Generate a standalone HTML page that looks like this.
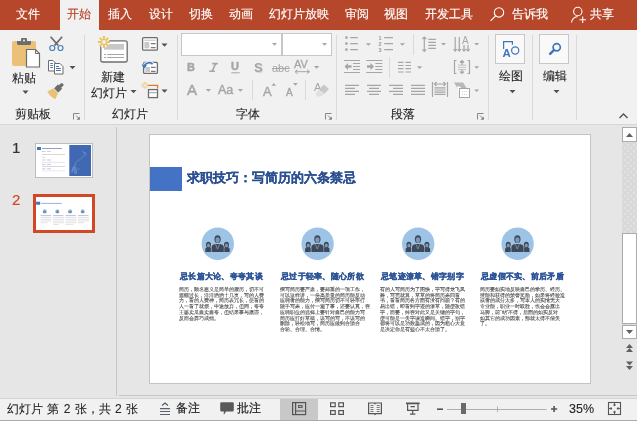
<!DOCTYPE html>
<html><head><meta charset="utf-8">
<style>
*{margin:0;padding:0;box-sizing:border-box}
html,body{width:637px;height:421px;overflow:hidden}
body{position:relative;will-change:transform;background:#E6E6E6;font-family:"Liberation Sans",sans-serif;color:#444}
.a{position:absolute;white-space:nowrap;line-height:1}
#tabs{position:absolute;left:0;top:0;width:637px;height:30px;background:#B7472A}
.tab{position:absolute;top:7px;font-size:12px;color:#fff;line-height:14px;-webkit-text-stroke:0.15px currentColor}
#ribbon{position:absolute;left:0;top:30px;width:637px;height:95px;background:#F1F1F1;border-bottom:1px solid #D6D6D6}
.sep{position:absolute;width:1px;background:#DADADA}
.lbl{position:absolute;font-size:12px;color:#262626;line-height:14px;-webkit-text-stroke:0.1px #262626}
svg{position:absolute;overflow:visible}
.dis{color:#A6A6A6}
.body{font-size:4.75px;line-height:5.7px;color:#505050;-webkit-text-stroke:0.1px #505050}
</style></head><body>
<div id="tabs">
 <div class="a" style="left:60px;top:0;width:39px;height:30px;background:#F1F1F1"></div>
 <span class="tab" style="left:16px">文件</span>
 <span class="tab" style="left:67px;color:#B7472A">开始</span>
 <span class="tab" style="left:108px">插入</span>
 <span class="tab" style="left:149px">设计</span>
 <span class="tab" style="left:189px">切换</span>
 <span class="tab" style="left:229px">动画</span>
 <span class="tab" style="left:269px">幻灯片放映</span>
 <span class="tab" style="left:345px">审阅</span>
 <span class="tab" style="left:384px">视图</span>
 <span class="tab" style="left:425px">开发工具</span>
 <span class="tab" style="left:512px">告诉我</span>
 <span class="tab" style="left:590px">共享</span>
</div>
<div id="ribbon"></div>
<!-- separators -->
<div class="sep" style="left:84px;top:35px;height:85px"></div>
<div class="sep" style="left:177px;top:35px;height:85px"></div>
<div class="sep" style="left:336px;top:35px;height:85px"></div>
<div class="sep" style="left:488px;top:35px;height:85px"></div>
<div class="sep" style="left:532px;top:35px;height:85px"></div>
<div class="sep" style="left:576px;top:35px;height:85px"></div>
<!-- group labels -->
<span class="lbl" style="left:15px;top:107px">剪贴板</span>
<span class="lbl" style="left:112px;top:107px">幻灯片</span>
<span class="lbl" style="left:236px;top:107px">字体</span>
<span class="lbl" style="left:391px;top:107px">段落</span>
<!-- button labels -->
<span class="lbl" style="left:12px;top:71px">粘贴</span>
<span class="lbl" style="left:101px;top:70px">新建</span>
<span class="lbl" style="left:91px;top:86px">幻灯片</span>
<span class="lbl" style="left:499px;top:69px">绘图</span>
<span class="lbl" style="left:543px;top:69px">编辑</span>
<!-- workspace -->
<div class="a" style="left:0;top:125px;width:637px;height:273px;background:#E6E6E6"></div>
<div class="a" style="left:116px;top:127px;width:1px;height:269px;background:#C6C6C6"></div>
<div class="a" style="left:119px;top:395px;width:518px;height:1px;background:#C6C6C6"></div>
<div class="a" style="left:0;top:398px;width:637px;height:23px;background:#F1F1F1;border-top:1px solid #D4D4D4"></div>
<!-- slide pane -->
<span class="a" style="left:12px;top:140px;font-size:15px;color:#333;-webkit-text-stroke:0.2px #333">1</span>
<span class="a" style="left:12px;top:192px;font-size:15px;color:#D24726;-webkit-text-stroke:0.2px #D24726">2</span>
<div class="a" style="left:35px;top:143px;width:58px;height:35px;background:#fff;border:1px solid #BDBDBD"></div>
<div class="a" style="left:33px;top:194px;width:62px;height:39px;border:3px solid #D24726;background:#fff"></div>
<svg style="left:0;top:0" width="120" height="240">
 <rect x="69.3" y="145" width="21.7" height="31" fill="#4168B2"/>
 <g fill="none" stroke="#7D9AD2" stroke-width="0.6" opacity="0.9">
  <path d="M82 151q2 2 4 2.5q1.5 1 -0.5 2q-3 0.5 -4 2.5q-1.5 2 -4 3q-2 1 -2.5 3.5q0 2 -2 3.5q-1.5 1.5 -1 4"/>
  <path d="M76 165q-2 1-3 3t-1 5M79 168q-1 2-3 3"/>
 </g>
 <g fill="#6F8FCC" opacity="0.7"><rect x="72.5" y="167" width="4" height="4"/><rect x="74" y="171" width="3" height="3"/><rect x="83.5" y="152" width="2" height="2"/></g>
 <rect x="37" y="147" width="4" height="3" fill="#4472C4"/>
 <g stroke-width="0.8">
  <path d="M42 148.5h20" stroke="#7888B8"/>
  <path d="M42 151.5h3.5M47 151.5h4" stroke="#B4C6E8"/>
  <path d="M42 154.5h23" stroke="#D4CCC4"/>
  <path d="M42 157.3h3" stroke="#DCCCCC"/>
  <path d="M42 160h3.5M47 160h4" stroke="#AFC0E0"/>
  <path d="M42 162.3h23" stroke="#DEDEDE"/>
  <path d="M42 164.4h3.5M47 164.4h4" stroke="#AFC0E0"/>
  <path d="M42 166.5h23" stroke="#CCCCD4"/>
  <path d="M42 168.8h3.5M47 168.8h4" stroke="#AFC0E0"/>
  <path d="M42 170.8h23" stroke="#E4E4E4"/>
 </g>
</svg>
<!-- main slide -->
<div class="a" style="left:149px;top:134px;width:442px;height:250px;background:#fff;border:1px solid #C4C4C4"></div>
<!-- scrollbar -->
<div class="a" style="left:622px;top:127px;width:15px;height:212px;background-color:#D9D9D9;background-image:radial-gradient(circle,#E8E8E8 0.6px,transparent 0.9px),radial-gradient(circle,#E8E8E8 0.6px,transparent 0.9px);background-size:6px 6px;background-position:0 0,3px 3px"></div>
<div class="a" style="left:622px;top:127px;width:15px;height:15px;background:#fff;border:1px solid #ABABAB"></div>
<div class="a" style="left:622px;top:233px;width:15px;height:91px;background:#fff;border:1px solid #ABABAB"></div>
<div class="a" style="left:622px;top:325px;width:15px;height:14px;background:#fff;border:1px solid #ABABAB"></div>
<svg style="left:0;top:0" width="637" height="421">
 <path d="M626 137h7l-3.5-4z M626 330h7l-3.5 4z" fill="#606060"/>
 <path d="M626 348l3.5-4 3.5 4z M626 352l3.5-4 3.5 4z M626 361.5l3.5 4 3.5-4z M626 366l3.5 4 3.5-4z" fill="#606060"/>
</svg>
<!-- status bar -->
<span class="a" style="left:7px;top:401.5px;font-size:12px;color:#262626;line-height:14px;word-spacing:1px;-webkit-text-stroke:0.1px #262626">幻灯片 第 2 张，共 2 张</span>
<!-- slide content -->
<div class="a" style="left:0;top:0;width:637px;height:421px">
<div class="a" style="left:150px;top:167px;width:32px;height:24px;background:#4472C4"></div>
<span class="a" style="left:186.5px;top:170px;font-size:13px;font-weight:bold;color:#2B5091;line-height:15px;-webkit-text-stroke:0.2px #2B5091">求职技巧：写简历的六条禁忌</span>
<svg style="left:0;top:0" width="637" height="421">
 <defs><g id="ppl">
  <circle r="16.2" fill="#9DC3E6"/>
  <g fill="#3E4858">
   <ellipse cx="-9.3" cy="0.9" rx="2.5" ry="2.9"/><path d="M-12.5 8.3v-3q0-1.8 3.2-2.4q3.2 0.6 3.2 2.4v3z"/>
   <ellipse cx="8.7" cy="0.9" rx="2.5" ry="2.9"/><path d="M5.5 8.3v-3q0-1.8 3.2-2.4q3.2 0.6 3.2 2.4v3z"/>
  </g>
  <g fill="#7F97B2"><ellipse cx="-9.3" cy="1.6" rx="1.5" ry="1.9"/><ellipse cx="8.7" cy="1.6" rx="1.5" ry="1.9"/></g>
  <path d="M-6.9 8.6v-5.4q0.2-2.6 4.4-3.4h4.6q4.2 0.8 4.4 3.4v5.4z" fill="#9DC3E6"/>
  <path d="M-6.2 8.3v-5q0.2-2.3 3.8-3h4.6q3.6 0.7 3.8 3v5z" fill="#3E4858"/>
  <path d="M-2.3 0.4l2 4.8 2-4.8" fill="none" stroke="#8EA4BE" stroke-width="0.7"/>
  <ellipse cx="-0.2" cy="-4.7" rx="3.6" ry="4.3" fill="#9DC3E6"/>
  <ellipse cx="-0.2" cy="-4.6" rx="3.1" ry="3.9" fill="#3E4858"/>
  <ellipse cx="-0.2" cy="-3.7" rx="2.1" ry="2.8" fill="#7F97B2"/>
 </g></defs>
 <use href="#ppl" x="217.8" y="243.8"/>
 <use href="#ppl" x="317.6" y="243.8"/>
 <use href="#ppl" x="418.2" y="243.8"/>
 <use href="#ppl" x="517.6" y="243.8"/>
</svg>
<span class="a" style="left:180px;top:271px;font-size:8.3px;font-weight:bold;color:#2E5597;line-height:10px;letter-spacing:0.3px;-webkit-text-stroke:0.3px #2E5597">忌长篇大论、夸夸其谈</span>
<div class="a body" style="left:179px;top:287px">简历，顾名思义是简单的履历，切不可<br>篇幅过长，洋洋洒洒十几页，写的人费<br>力，看的人费神，简历表冗长，使看的<br>人一看了就烦，中途放弃，但同，夸夸<br>王婆卖瓜自卖自夸，但结果事与愿违，<br>反而会弄巧成拙。</div>
<span class="a" style="left:281px;top:271px;font-size:8.3px;font-weight:bold;color:#2E5597;line-height:10px;letter-spacing:0.3px;-webkit-text-stroke:0.3px #2E5597">忌过于轻率、随心所欲</span>
<div class="a body" style="left:280px;top:287px">撰写简历要严肃，要郑重的一项工作，<br>可以这样讲，一份高质量的简历能反动<br>应聘者的能力，撰写简历切不可轻率行<br>随手写来，应付一遍了事，还要认真，在<br>应聘职位的选择上要针对自己的能力写<br>简历应打好草稿，该写的写，不该写的<br>删除，轻松地写，简历应做到合适合<br>合轮、合理、合情。</div>
<span class="a" style="left:381px;top:271px;font-size:8.3px;font-weight:bold;color:#2E5597;line-height:10px;letter-spacing:0.3px;-webkit-text-stroke:0.3px #2E5597">忌笔迹潦草、错字别字</span>
<div class="a body" style="left:380px;top:287px">有的人写简历为了图快，字写得龙飞凤<br>舞，写完就算，草草的将简历来回看<br>书，看看简历各方面有没有问题？有的<br>易出错，即看到字迹的潦草，随便改错<br>字，而要，掉在对此又是关键的字句，<br>便可能是一失字误造瞬间。错字，别字<br>都将可以是功败垂成的，因为粗心大意<br>是决定你是有些心不太合适了。</div>
<span class="a" style="left:481px;top:271px;font-size:8.3px;font-weight:bold;color:#2E5597;line-height:10px;letter-spacing:0.3px;-webkit-text-stroke:0.3px #2E5597">忌虚假不实、前后矛盾</span>
<div class="a body" style="left:480px;top:287px">简历要如实地反映自己的学历、经历、<br>技能和获得的荣誉奖励，如果将经验造<br>或者的成分太多，写本人的实情无大<br>专业能，职业一时取胜，也会会露出<br>马脚，前“站”不得，后面的如实反对<br>如其它的成功因素，那就太得不偿失<br>了。</div>
</div>
<div class="a" style="left:36px;top:197px;width:56px;height:33px;overflow:hidden">
<div class="a" style="left:0;top:0;width:637px;height:421px;transform-origin:0 0;transform:scale(0.1267) translate(-149px,-130px)">
<div class="a" style="left:150px;top:167px;width:32px;height:24px;background:#4472C4"></div>
<svg style="left:0;top:0" width="637" height="421">
 <defs><g id="ppl2">
  <circle r="16.2" fill="#9DC3E6"/>
  <g fill="#3E4858">
   <ellipse cx="-9.3" cy="0.9" rx="2.5" ry="2.9"/><path d="M-12.5 8.3v-3q0-1.8 3.2-2.4q3.2 0.6 3.2 2.4v3z"/>
   <ellipse cx="8.7" cy="0.9" rx="2.5" ry="2.9"/><path d="M5.5 8.3v-3q0-1.8 3.2-2.4q3.2 0.6 3.2 2.4v3z"/>
  </g>
  <g fill="#7F97B2"><ellipse cx="-9.3" cy="1.6" rx="1.5" ry="1.9"/><ellipse cx="8.7" cy="1.6" rx="1.5" ry="1.9"/></g>
  <path d="M-6.9 8.6v-5.4q0.2-2.6 4.4-3.4h4.6q4.2 0.8 4.4 3.4v5.4z" fill="#9DC3E6"/>
  <path d="M-6.2 8.3v-5q0.2-2.3 3.8-3h4.6q3.6 0.7 3.8 3v5z" fill="#3E4858"/>
  <path d="M-2.3 0.4l2 4.8 2-4.8" fill="none" stroke="#8EA4BE" stroke-width="0.7"/>
  <ellipse cx="-0.2" cy="-4.7" rx="3.6" ry="4.3" fill="#9DC3E6"/>
  <ellipse cx="-0.2" cy="-4.6" rx="3.1" ry="3.9" fill="#3E4858"/>
  <ellipse cx="-0.2" cy="-3.7" rx="2.1" ry="2.8" fill="#7F97B2"/>
 </g></defs>
 <use href="#ppl2" x="217.8" y="243.8"/>
 <use href="#ppl2" x="317.6" y="243.8"/>
 <use href="#ppl2" x="418.2" y="243.8"/>
 <use href="#ppl2" x="517.6" y="243.8"/>
</svg>
</div>
<svg style="left:0;top:0" width="56" height="33">
 <path d="M5.2 6.4h20.5" stroke="#8C9CC8" stroke-width="0.8"/>
 <g stroke="#A7B4D8" stroke-width="0.8"><path d="M4.5 18.6h10.5M17 18.6h10.5M29.5 18.6h10.5M42 18.6h10.5"/></g>
 <g stroke="#D6D6D6" stroke-width="0.7">
  <path d="M4.5 20.6h11M17 20.6h11M29.5 20.6h11M42 20.6h11"/>
  <path d="M4.5 22.3h11M17 22.3h11M29.5 22.3h11M42 22.3h11"/>
  <path d="M4.5 24h11M17 24h11M29.5 24h11M42 24h11"/>
  <path d="M4.5 25.7h7M17 25.7h11M29.5 25.7h11M42 25.7h6"/>
  <path d="M17 27.4h6M29.5 27.4h8"/>
 </g>
</svg>
</div>
<!-- status icons -->
<div class="a" style="left:280px;top:399px;width:38px;height:22px;background:#C8C8C8"></div>
<div class="a" style="left:0;top:420px;width:637px;height:1px;background:#ABABAB"></div>
<span class="a" style="left:176px;top:401px;font-size:12px;color:#262626;line-height:14px;-webkit-text-stroke:0.2px #262626">备注</span>
<span class="a" style="left:237px;top:401px;font-size:12px;color:#262626;line-height:14px;-webkit-text-stroke:0.2px #262626">批注</span>
<span class="a" style="left:569px;top:402px;font-size:12.5px;color:#262626;line-height:14px;-webkit-text-stroke:0.1px #262626">35%</span>
<svg style="left:0;top:0" width="637" height="421">
 <path d="M162 405.5l3-2.5 3 2.5" fill="none" stroke="#555" stroke-width="1.1"/>
 <path d="M160 408.6h10M160 411.5h10M160 414.5h10" stroke="#5A6070" stroke-width="1.1"/>
 <path d="M221.5 402.2h11a1.3 1.3 0 0 1 1.3 1.3v6.7a1.3 1.3 0 0 1-1.3 1.3h-6.5l-2.2 3.6v-3.6h-2.3a1.3 1.3 0 0 1-1.3-1.3v-6.7a1.3 1.3 0 0 1 1.3-1.3z" fill="#595959"/>
 <g fill="none" stroke="#555" stroke-width="1.2">
  <rect x="292.6" y="402.6" width="13" height="12"/>
  <path d="M295.6 402.6v12M295.6 411h10"/>
  <rect x="298.5" y="405.6" width="3.6" height="1.8" stroke-width="1"/>
  <rect x="330.6" y="402.8" width="4.6" height="3.8"/><rect x="338.8" y="402.8" width="4.6" height="3.8"/>
  <rect x="330.6" y="410.6" width="4.6" height="3.8"/><rect x="338.8" y="410.6" width="4.6" height="3.8"/>
  <path d="M368.6 403v10.6h5.8l0.6 0.9 0.6-0.9h5.8v-10.6h-5.8l-0.6 0.8-0.6-0.8z"/>
  <path d="M370.5 405.5h3M370.5 407.5h3M370.5 409.5h3M370.5 411.5h3M376.7 405.5h3M376.7 407.5h3M376.7 409.5h3M376.7 411.5h3" stroke-width="0.8"/>
  <path d="M407.6 404.2v6.2h10.4v-6.2M412.7 410.4v3.6M410 414.2h5.4M410.5 406.6h4.4"/>
  <rect x="608.5" y="402.5" width="12" height="12" stroke="#555" stroke-width="1.1"/>
 </g>
 <path d="M406 403.4h13.6" stroke="#555" stroke-width="1.8"/>
 <g stroke="#555" stroke-width="0.9" fill="none">
  <path d="M614.5 403v3.2M613 405h3M614.5 414v-3.2M613 412h3M609 408.5h3.2M611 407v3M620 408.5h-3.2M618 407v3"/>
 </g>
 <path d="M437 409.2h6" stroke="#555" stroke-width="1.6"/>
 <path d="M551 409h6.2M554.1 405.9v6.2" stroke="#555" stroke-width="1.6"/>
 <path d="M447 409.5h99.5" stroke="#B0B0B0" stroke-width="1"/>
 <path d="M497.5 406.5v5.5" stroke="#B0B0B0" stroke-width="1"/>
 <rect x="461" y="403" width="5" height="11" fill="#6A6A6A"/>
 <!-- title icons -->
 <g fill="none" stroke="#fff" stroke-width="1.1">
  <circle cx="499" cy="12.4" r="4.7"/><path d="M495.6 15.9l-5 5"/>
  <circle cx="577.8" cy="11.5" r="4.2"/>
  <path d="M571.5 22.5c0.5-3 3-5.5 6-6"/>
  <path d="M582.7 16.5v6.5M579.5 19.7h6.5"/>
 </g>
</svg>
<!-- font group -->
<div class="a" style="left:181px;top:33px;width:101px;height:23px;background:#fff;border:1px solid #C6C6C6"></div>
<div class="a" style="left:282px;top:33px;width:50px;height:23px;background:#fff;border:1px solid #C6C6C6"></div>
<span class="a dis" style="left:187px;top:62px;font-size:11px;font-weight:bold;-webkit-text-stroke:0.4px #A6A6A6">B</span>

<span class="a dis" style="left:231px;top:61px;font-size:11px;font-weight:bold;-webkit-text-stroke:0.4px #A6A6A6">U</span>
<span class="a dis" style="left:254px;top:61px;font-size:13px;font-weight:bold;text-shadow:1px 1px 0 #D5D5D5">S</span>
<span class="a dis" style="left:272px;top:63px;font-size:11px;text-decoration:line-through">abc</span>
<span class="a dis" style="left:294px;top:59px;font-size:11px;-webkit-text-stroke:0.3px #A6A6A6">AV</span>
<span class="a dis" style="left:187px;top:82px;font-size:15px;-webkit-text-stroke:0.5px #A6A6A6">A</span>
<span class="a dis" style="left:218px;top:84px;font-size:12.5px;-webkit-text-stroke:0.4px #A6A6A6">Aa</span>
<span class="a dis" style="left:263px;top:85px;font-size:13px;-webkit-text-stroke:0.4px #A6A6A6">A</span>
<span class="a dis" style="left:286px;top:88px;font-size:10px;-webkit-text-stroke:0.4px #A6A6A6">A</span>
<span class="a dis" style="left:314px;top:82px;font-size:11px">A</span>
<div class="sep" style="left:252px;top:80px;height:20px"></div>
<div class="sep" style="left:305px;top:80px;height:20px"></div>
<svg style="left:0;top:0" width="637" height="124">
 <g fill="#A6A6A6">
  <path d="M272 43h5l-2.5 2.7z M322 43h5l-2.5 2.7z"/>
  <path d="M314 66h5.2l-2.6 2.8z M205.8 89h5.2l-2.6 2.8z M237.8 89h5.2l-2.6 2.8z"/>
  <path d="M271.5 85.7h4.6l-2.3-2.7z M293 83h4.8l-2.4 2.8z"/>
 </g>
 <path d="M212.2 63.6h5.6M209.2 71.2h5.6M215.6 63.6l-3.4 7.6" stroke="#A6A6A6" stroke-width="1.6" fill="none"/>
 <path d="M231.3 72.8h8.5" stroke="#A6A6A6" stroke-width="1"/>
 <path d="M295 71.7h14.5M295 71.7l2.5-2M295 71.7l2.5 2M309.5 71.7l-2.5-2M309.5 71.7l-2.5 2" stroke="#A6A6A6" stroke-width="1" fill="none"/>
 <path d="M319 89l5-4.5 5 4.5-5 5z" fill="#C8C8C8"/>
 <path d="M318.5 89.5l5 5-2.5 2h-3.5l-2-2z" fill="#E0E0E0"/>
</svg>
<!-- paragraph group -->
<div class="sep" style="left:413px;top:34px;height:21px"></div>
<div class="sep" style="left:389px;top:57px;height:21px"></div>
<svg style="left:0;top:0" width="637" height="124">
 <g fill="#A6A6A6">
  <circle cx="346.4" cy="37.6" r="1.4"/><circle cx="346.4" cy="43.6" r="1.4"/><circle cx="346.4" cy="49.6" r="1.4"/>
  <path d="M365.8 43.2h5.2l-2.6 2.6z M399.8 43.2h5.2l-2.6 2.6z M441 43h5l-2.5 2.5z M474.2 43h5l-2.5 2.5z M417 66.3h5.2l-2.6 2.6z M474.2 66.2h5l-2.5 2.5z M474.2 89.4h5l-2.5 2.5z"/>
 </g>
 <g stroke="#A6A6A6" stroke-width="1.2" fill="none">
  <path d="M350.2 37.6h7.6M350.2 43.6h7.6M350.2 49.6h7.6"/>
  <path d="M384.2 37.6h8.8M384.2 43.6h8.8M384.2 49.6h8.8"/>
  <!-- indent -->
  <path d="M344 60.5h16M353 63.5h7M353 66.5h7M353 69.5h7M344 72.5h16"/>
  <path d="M366.3 60.5h16M375.3 63.5h7M375.3 66.5h7M375.3 69.5h7M366.3 72.5h16"/>
  <path d="M398 62.3h5.5M405.5 62.3h5.5M398 65.5h5.5M405.5 65.5h5.5M398 68.7h5.5M405.5 68.7h5.5M398 72h5.5M405.5 72h5.5"/>
  <!-- line spacing -->
  <path d="M424.3 37v14M428.3 39.3h7.6M428.3 42.4h7.6M428.3 45.4h7.6M428.3 48.4h7.6"/>
  <path d="M422.3 39l2-2 2 2M422.3 49.4l2 2 2-2"/>
  <!-- text dir -->
  <path d="M455.2 37v14M459.3 37v14M464 45v6M468 45v6"/>
  <path d="M453.6 49.2l1.6 1.8 1.6-1.8M457.7 49.2l1.6 1.8 1.6-1.8M462.4 49.2l1.6 1.8 1.6-1.8M466.4 49.2l1.6 1.8 1.6-1.8"/>
  <!-- align text -->
  <path d="M456.5 60.5h-2v13h2M467.5 60.5h2v13h-2M462 61v4M462 69v4.5M460 62.5l2-2 2 2M460 71.5l2 2 2-2"/>
  <!-- alignment -->
  <path d="M345 85.3h14M345 88.4h10M345 91.3h14M345 94.4h10"/>
  <path d="M367 85.3h14M369 88.4h10M367 91.3h14M369 94.4h10"/>
  <path d="M389 85.3h14M393 88.4h10M389 91.3h14M393 94.4h10"/>
  <path d="M411 85.3h14M411 88.4h14M411 91.3h14M411 94.4h14"/>
  <path d="M432.5 82v15M447.5 82v15M434.5 84h11M436.5 82l-2 2 2 2M443.5 82l2 2-2 2M434.5 87.8h11M434.5 90h11M434.5 92.2h11M434.5 94.4h11"/>
 </g>
 <g stroke="#BDBDBD" stroke-width="0.9" fill="none"><path d="M458 65.1h8M458 67.3h8M458 69.5h8"/></g>
 <path d="M344.5 66.5l3.5-3.5v2.3h3.5v2.4h-3.5v2.3z" fill="#A6A6A6"/>
 <path d="M374 66.5l-3.5-3.5v2.3h-3.5v2.4h3.5v2.3z" fill="#A6A6A6"/>
 <g fill="#999" font-family="Liberation Sans" font-size="5.5" font-weight="bold">
  <text x="378.6" y="40">1</text><text x="378.6" y="46">2</text><text x="378.6" y="52">3</text>
 </g>
 <text x="462" y="44" font-family="Liberation Sans" font-size="10" fill="#A6A6A6">A</text>
 <path d="M454 82.5h9l5.5 8.5h-9.5z" fill="#B8B8B8"/>
 <path d="M457 86.5h3l3 4.5h-5z" fill="#fff"/>
 <rect x="459.5" y="88.5" width="10" height="9" fill="#fff" stroke="#A6A6A6" stroke-width="1"/>
 <path d="M462 91.5h5M462 94.5h5" stroke="#C8C8C8" stroke-width="0.8" stroke-dasharray="1 1"/>
</svg>
<!-- drawing/editing -->
<div class="a" style="left:495px;top:34px;width:30px;height:30px;background:#F9F9F9;border:1px solid #C8C8C8"></div>
<div class="a" style="left:539px;top:34px;width:30px;height:30px;background:#F9F9F9;border:1px solid #C8C8C8"></div>
<svg style="left:0;top:0" width="637" height="124">
  <path d="M503.6 49v-7.4h8.8v3.2" fill="none" stroke="#3D74C0" stroke-width="1.2"/>
 <circle cx="515.2" cy="50.5" r="3.6" fill="none" stroke="#3D74C0" stroke-width="1.2"/>
 <text x="502.4" y="57" font-family="Liberation Sans" font-weight="bold" font-size="11.5" fill="#3D74C0" stroke="#fff" stroke-width="0.6" paint-order="stroke">A</text>
 <circle cx="556.7" cy="47.3" r="3.6" fill="none" stroke="#3D74C0" stroke-width="1.7"/>
 <path d="M553.9 50.1l-3.8 3.8" stroke="#3D74C0" stroke-width="2.4" stroke-linecap="round"/>
 <path d="M509.5 90h6l-3 3.2z M553.5 90h6l-3 3.2z" fill="#505050"/>
 <path d="M619.5 118l4-4 4 4" fill="none" stroke="#505050" stroke-width="1.3"/>
</svg>
<!-- clipboard icons -->
<svg style="left:0;top:0" width="637" height="124" viewBox="0 0 637 124">
 <g id="paste">
  <rect x="12" y="41" width="24" height="25" rx="2" fill="#EBC178"/>
  <path d="M17 41h14v2.5a1.5 1.5 0 0 1-1.5 1.5h-11a1.5 1.5 0 0 1-1.5-1.5z" fill="#6D6D6D"/>
  <rect x="21" y="38" width="6" height="4" rx="1" fill="#6D6D6D"/>
  <circle cx="24" cy="40.5" r="1" fill="#F1F1F1"/>
  <path d="M26.5 49.5h9l4 4v13.5h-13z" fill="#fff" stroke="#6D6D6D" stroke-width="1.2"/>
  <path d="M35.5 49.5v4h4" fill="none" stroke="#6D6D6D" stroke-width="1"/>
 </g>
 <path d="M22.5 90.5h6l-3 3.5z" fill="#505050"/>
 <g id="scissors">
  <path d="M50.6 36.8l7.6 8.6M62.2 36.8l-7.6 8.6" stroke="#6D6D6D" stroke-width="1.7" fill="none"/>
  <circle cx="52.3" cy="48" r="2.5" fill="#F1F1F1" stroke="#4A7EBB" stroke-width="1.2"/>
  <circle cx="60.5" cy="48" r="2.5" fill="#F1F1F1" stroke="#4A7EBB" stroke-width="1.2"/>
 </g>
 <g id="copy">
  <path d="M48.5 60.5h4.5l2.5 2.5v8h-7z" fill="#fff" stroke="#6D6D6D" stroke-width="1"/>
  <path d="M50.3 63.5h2.6M50.3 65.5h2.6M50.3 67.5h2.6" stroke="#3D74C0" stroke-width="1"/>
  <path d="M54.5 63.5h5.5l3 3v7.5h-8.5z" fill="#fff" stroke="#6D6D6D" stroke-width="1"/>
  <path d="M56 66.5h3M56 68.5h4.8M56 70.5h4.8" stroke="#3D74C0" stroke-width="1"/>
 </g>
 <path d="M69.5 66h6l-3 3.2z" fill="#505050"/>
 <g id="painter" transform="translate(61.8 84.8) rotate(45)">
  <rect x="-1.7" y="-1.6" width="3.4" height="4.6" rx="1.3" fill="#6D6D6D"/>
  <rect x="-3" y="2.4" width="6" height="5.6" rx="0.6" fill="#6D6D6D"/>
  <path d="M-3.4 8.6h6.8l2.2 6.2q-5.6 2.2-11.2 0z" fill="#EBC178"/>
 </g>
 <!-- new slide -->
 <rect x="100.8" y="40.8" width="26.4" height="21.2" rx="2" fill="#fff" stroke="#6D6D6D" stroke-width="1.3"/>
 <rect x="104" y="44" width="20" height="5.7" fill="#C8C8C8"/>
 <path d="M104 54.5h2M107.2 54.5h16.8M104 57.5h2M107.2 57.5h16.8" stroke="#A6A6A6" stroke-width="1"/>
 <circle cx="104" cy="42" r="5.5" fill="#F1F1F1"/>
 <g stroke="#EDC060" stroke-width="1.9">
  <path d="M104 36v4.2M104 43.8v4.2M98 42h4.2M105.8 42h4.2M99.8 37.8l2.9 2.9M105.3 43.3l2.9 2.9M108.2 37.8l-2.9 2.9M102.7 43.3l-2.9 2.9"/>
 </g>
 <path d="M130.5 90h6l-3 3.2z" fill="#505050"/>
 <!-- layout -->
 <rect x="142.6" y="37.6" width="14.8" height="12.6" rx="1" fill="#fff" stroke="#6D6D6D" stroke-width="1.3"/>
 <rect x="144.4" y="39.6" width="11.2" height="1.4" fill="#D0D0D0"/>
 <rect x="144.4" y="42" width="4.8" height="6.3" fill="#C8C8C8"/>
 <path d="M150.8 43.6h4.8M150.8 47.6h4.8" stroke="#7A7A7A" stroke-width="1.2"/>
 <path d="M161.5 43.5h6l-3 3.2z" fill="#505050"/>
 <!-- reset -->
 <rect x="143.6" y="62.4" width="13.8" height="11" rx="1" fill="#fff" stroke="#6D6D6D" stroke-width="1.3"/>
 <rect x="145.4" y="67" width="4.6" height="5" fill="#C8C8C8"/>
 <path d="M151 67.3h4.6M151 71.3h4.6" stroke="#7A7A7A" stroke-width="1.2"/>
 <path d="M144 63.8h5.5" stroke="#C8C8C8" stroke-width="1"/>
 <path d="M144.2 66.5c0.8-3.5 5.8-5.2 8.4-2.2" fill="none" stroke="#F1F1F1" stroke-width="3.6"/>
 <path d="M144.2 66.5c0.8-3.5 5.8-5.2 8.4-2.2" fill="none" stroke="#3D74C0" stroke-width="1.7"/>
 <path d="M141.6 64.3l2.4 4.4 3-3.4z" fill="#3D74C0"/>
 <!-- section -->
 <path d="M148 85.4h9.6v3" fill="none" stroke="#E2772E" stroke-width="1.3"/>
 <rect x="148.5" y="89.6" width="9" height="8" fill="#fff" stroke="#6D6D6D" stroke-width="1.3"/>
 <path d="M149.2 92.7h7.6" stroke="#9A9A9A" stroke-width="1"/>
 <path d="M144.9 81.9v2.2M144.9 86.5v2.2M141.5 85.3h2.2M146.1 85.3h2.2M142.5 82.9l1.5 1.5M145.8 86.2l1.5 1.5M147.3 82.9l-1.5 1.5M144 86.2l-1.5 1.5" stroke="#EDC060" stroke-width="1"/>
 <path d="M161.5 89.5h6l-3 3.2z" fill="#505050"/>
 <!-- launchers -->
 <g fill="none" stroke="#7A7A7A" stroke-width="0.9">
  <path d="M73.5 119.5v-6h6"/><path d="M76 115.5l3.5 3.5"/>
  <path d="M325.5 119.5v-6h6"/><path d="M328 115.5l3.5 3.5"/>
  <path d="M477.5 119.5v-6h6"/><path d="M480 115.5l3.5 3.5"/>
 </g>
 <path d="M79.8 116.5v3.3h-3.3z M331.8 116.5v3.3h-3.3z M483.8 116.5v3.3h-3.3z" fill="#7A7A7A"/>
</svg>
</body></html>
